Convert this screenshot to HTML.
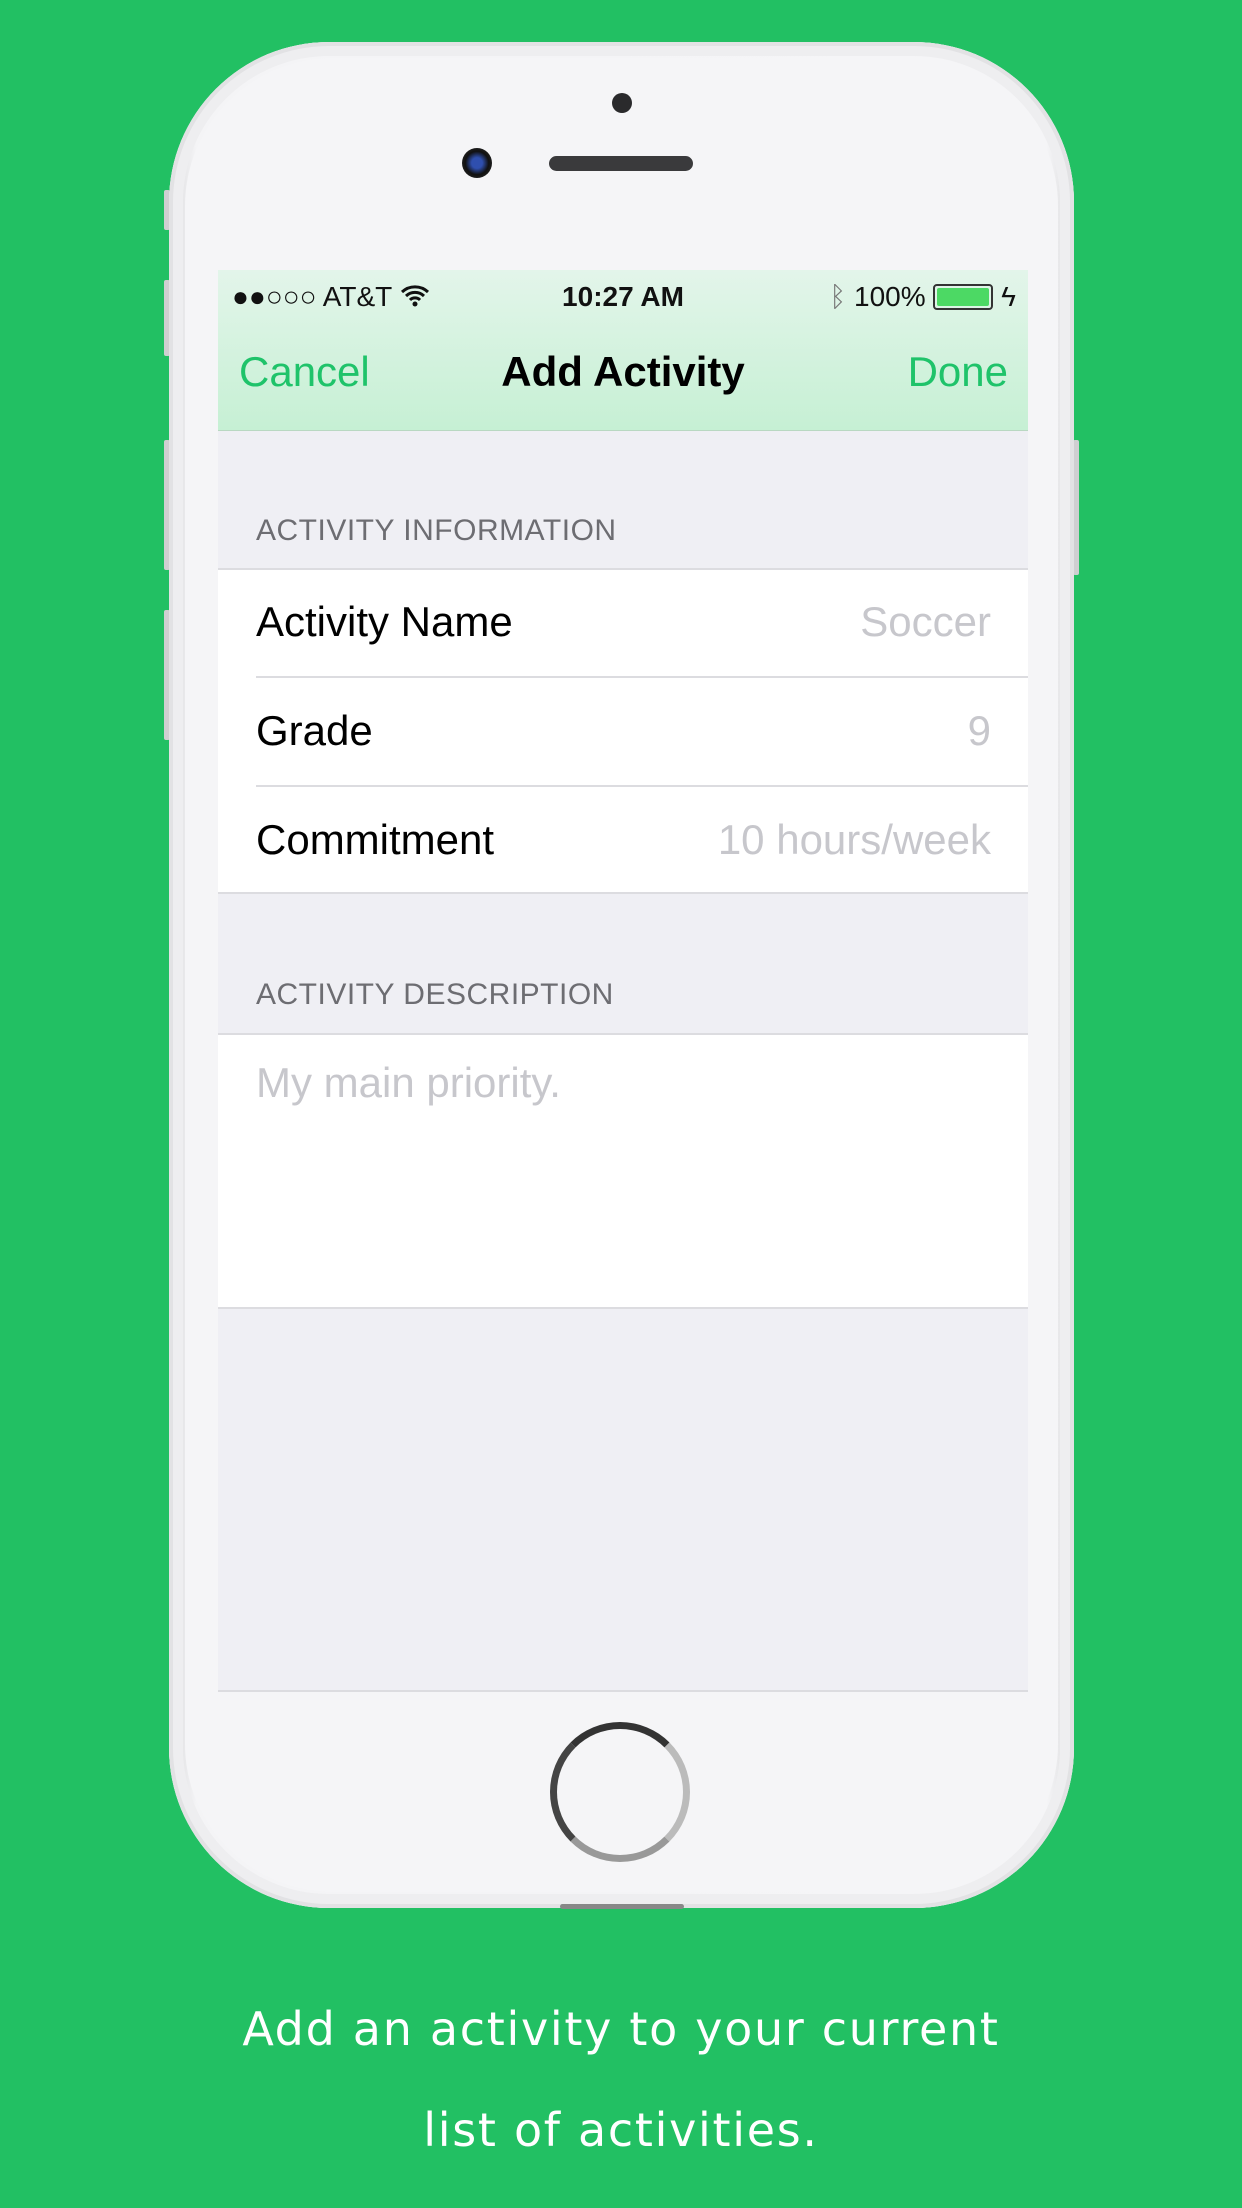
<!DOCTYPE html>
<html><head><meta charset="utf-8"><style>
*{margin:0;padding:0;box-sizing:border-box}
body{width:1242px;height:2208px;background:#22c063;position:relative;overflow:hidden;font-family:"Liberation Sans",sans-serif}
.abs{position:absolute}
.phone{left:169px;top:42px;width:905px;height:1866px;border-radius:160px;background:linear-gradient(90deg,#d8d8da,#f4f4f6 3%,#f5f5f7 97%,#d8d8da);box-shadow:inset 0 0 0 4px #e2e2e4,inset 0 0 0 14px #eeeef0}
.face{left:185px;top:58px;width:873px;height:1834px;border-radius:148px;background:#f5f5f7}
.btn{background:#cfcfd1;width:6px;border-radius:2px}
.screen{left:218px;top:270px;width:810px;height:1422px;background:#efeff4;overflow:hidden}
.nav{left:0;top:0;width:810px;height:161px;background:linear-gradient(#e3f5ea,#c6f0d4);border-bottom:1px solid #b9d8c2}
.st{font-size:28px;color:#111;top:11px}
.lbl{font-size:42px;color:#000}
.val{font-size:42px;color:#c7c7cc;right:37px}
.hdr{font-size:30px;color:#6d6d72;left:38px;letter-spacing:.5px}
.sep{height:2px;background:#dcdce0}
.cap{width:1242px;text-align:center;color:#fff;font-family:"DejaVu Sans",sans-serif;font-size:46px;letter-spacing:1.7px}
</style></head><body>
<div class="abs btn" style="left:164px;top:190px;height:40px"></div>
<div class="abs btn" style="left:164px;top:280px;height:76px"></div>
<div class="abs btn" style="left:164px;top:440px;height:130px"></div>
<div class="abs btn" style="left:164px;top:610px;height:130px"></div>
<div class="abs btn" style="left:1073px;top:440px;height:135px"></div>
<div class="abs phone"></div>
<div class="abs face"></div>
<div class="abs" style="left:612px;top:93px;width:20px;height:20px;border-radius:50%;background:#2a2a2c"></div>
<div class="abs" style="left:462px;top:148px;width:30px;height:30px;border-radius:50%;background:radial-gradient(circle,#2f4fae 25%,#111 55%,#333 100%)"></div>
<div class="abs" style="left:549px;top:156px;width:144px;height:15px;border-radius:8px;background:#3a3a3c"></div>
<div class="abs screen">
 <div class="abs nav">
  <div class="abs st" style="left:14px">●●○○○ AT&amp;T <svg width="30" height="24" viewBox="0 0 30 24" style="vertical-align:-2px"><path d="M2 8a19 19 0 0 1 26 0M6 12a13 13 0 0 1 18 0M10 16a7 7 0 0 1 10 0" stroke="#111" stroke-width="3" fill="none"/><circle cx="15" cy="20" r="2.5" fill="#111"/></svg></div>
  <div class="abs st" style="left:0;width:810px;text-align:center;font-weight:bold">10:27 AM</div>
  <div class="abs st" style="right:12px"><span style="color:#777">ᛒ</span> 100% <span style="display:inline-block;width:60px;height:26px;border:2px solid #333;border-radius:4px;vertical-align:-4px;padding:2px"><span style="display:block;width:100%;height:100%;background:#4cd964;border-radius:2px"></span></span> ϟ</div>
  <div class="abs" style="left:21px;top:78px;font-size:42px;color:#1fc36a">Cancel</div>
  <div class="abs" style="left:0;width:810px;text-align:center;top:78px;font-size:42px;font-weight:bold">Add Activity</div>
  <div class="abs" style="right:20px;top:78px;font-size:42px;color:#1fc36a">Done</div>
 </div>
 <div class="abs hdr" style="top:244px">ACTIVITY INFORMATION</div>
 <div class="abs" style="left:0;top:298px;width:810px;height:326px;background:#fff;border-top:2px solid #dcdce0;border-bottom:2px solid #dcdce0">
  <div class="abs lbl" style="left:38px;top:28px">Activity Name</div><div class="abs val" style="top:28px">Soccer</div>
  <div class="abs sep" style="left:38px;right:0;top:106px"></div>
  <div class="abs lbl" style="left:38px;top:137px">Grade</div><div class="abs val" style="top:137px">9</div>
  <div class="abs sep" style="left:38px;right:0;top:215px"></div>
  <div class="abs lbl" style="left:38px;top:246px">Commitment</div><div class="abs val" style="top:246px">10 hours/week</div>
 </div>
 <div class="abs hdr" style="top:708px">ACTIVITY DESCRIPTION</div>
 <div class="abs" style="left:0;top:763px;width:810px;height:276px;background:#fff;border-top:2px solid #dcdce0;border-bottom:2px solid #dcdce0">
  <div class="abs" style="left:38px;top:24px;font-size:42px;color:#c7c7cc">My main priority.</div>
 </div>
 <div class="abs" style="left:0;top:1420px;width:810px;height:2px;background:#dcdce0"></div>
</div>
<div class="abs" style="left:550px;top:1722px;width:140px;height:140px;border-radius:50%;border:7px solid #888;border-top-color:#333;border-left-color:#444;border-right-color:#bbb;border-bottom-color:#999"></div>
<div class="abs" style="left:560px;top:1904px;width:124px;height:5px;border-radius:3px;background:#888"></div>
<div class="abs cap" style="top:2002px">Add an activity to your current</div>
<div class="abs cap" style="top:2103px">list of activities.</div>
</body></html>
